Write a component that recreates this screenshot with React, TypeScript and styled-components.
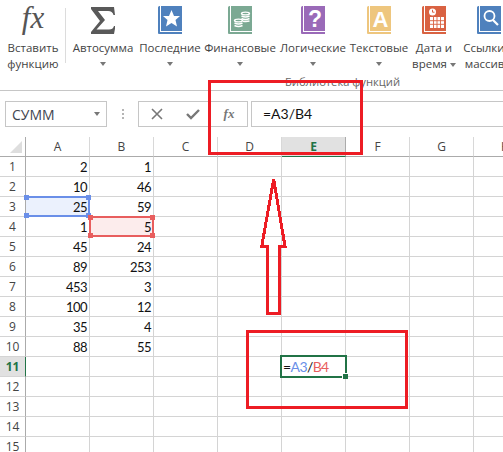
import type { ReactNode } from 'react';
import styled, { createGlobalStyle } from 'styled-components';

const Global = createGlobalStyle`
  html, body { margin: 0; padding: 0; background: #fff; }
  body { font-family: 'Open Sans', 'Liberation Sans', sans-serif; overflow: hidden; }
`;

const Page = styled.div`
  position: relative;
  width: 503px;
  height: 452px;
  overflow: hidden;
  background: #fff;
`;

/* ribbon */
const Ribbon = styled.div`
  height: 91px;
  box-sizing: border-box;
  border-bottom: 1px solid #c6c6c6;
  overflow: hidden;
`;

const RibbonRow = styled.div`
  display: flex;
  height: 75px;
  width: 522px;
`;

const RibbonItem = styled.div<{ $w: number; $sep?: boolean }>`
  position: relative;
  flex: none;
  width: ${({ $w }) => $w}px;
  display: flex;
  flex-direction: column;
  align-items: center;
  padding-top: 6px;
  box-sizing: border-box;
  font-size: 11.5px;
  line-height: 16px;
  color: #444;
  white-space: nowrap;
  ${({ $sep }) =>
    $sep &&
    `
    &::after {
      content: '';
      position: absolute;
      right: 0;
      top: 8px;
      height: 55px;
      width: 1px;
      background: #dcdcdc;
    }
  `}
`;

const IconSlot = styled.div`
  height: 28px;
  margin-bottom: 6px;
  display: flex;
  align-items: center;
  justify-content: center;
`;

const FxGlyph = styled.span`
  font-family: 'Liberation Serif', serif;
  font-style: italic;
  font-size: 31px;
  line-height: 26px;
  margin-top: -4px;
  color: #555;
`;

const Caret = styled.i`
  display: inline-block;
  width: 0;
  height: 0;
  border-left: 3.5px solid transparent;
  border-right: 3.5px solid transparent;
  border-top: 4px solid #777;
  vertical-align: middle;
`;

const CaretLine = styled.div`
  height: 16px;
  display: flex;
  align-items: center;
`;

const GroupLabel = styled.div`
  padding-left: 285px;
  font-size: 11.2px;
  line-height: 14px;
  color: #666;
`;

/* formula bar */
const FormulaBar = styled.div`
  height: 46px;
  box-sizing: border-box;
  padding: 10px 0 0 5px;
  display: flex;
  align-items: flex-start;
`;

const NameBox = styled.div`
  width: 102px;
  height: 26px;
  box-sizing: border-box;
  border: 1px solid #c6c6c6;
  display: flex;
  align-items: center;
  justify-content: space-between;
  padding: 0 6px;
  font-size: 14px;
  color: #3f4650;
`;

const Dots = styled.div`
  width: 31px;
  height: 26px;
  display: flex;
  flex-direction: column;
  align-items: center;
  justify-content: center;
  gap: 2px;
  flex: none;

  i {
    width: 2px;
    height: 2px;
    background: #b5b5b5;
  }
`;

const ButtonBox = styled.div`
  width: 110px;
  height: 26px;
  box-sizing: border-box;
  border: 1px solid #c6c6c6;
  display: grid;
  grid-template-columns: repeat(3, 36px);
  align-items: center;
  justify-items: center;
  flex: none;
`;

const SmallFx = styled.span`
  font-family: 'Liberation Serif', serif;
  font-style: italic;
  font-weight: bold;
  font-size: 13px;
  color: #777;
`;

const FormulaInput = styled.div`
  margin-left: 3px;
  flex: 1;
  height: 26px;
  box-sizing: border-box;
  border: 1px solid #c6c6c6;
  border-right: none;
  padding-left: 11px;
  font-family: Lato, 'Liberation Sans', sans-serif;
  font-size: 14px;
  line-height: 24px;
  color: #111;
`;

/* sheet */
const Sheet = styled.div`
  display: grid;
  grid-template-columns: 26px repeat(8, 64px);
  grid-auto-rows: 20px;
  width: 538px;
  font-family: Lato, 'Liberation Sans', sans-serif;
`;

const Corner = styled.div`
  position: relative;
  box-sizing: border-box;
  border-right: 1px solid #ababab;
  border-bottom: 1px solid #ababab;

  &::after {
    content: '';
    position: absolute;
    right: 3px;
    bottom: 3px;
    border-style: solid;
    border-width: 0 0 12px 12px;
    border-color: transparent transparent #dedede transparent;
  }
`;

const ColHead = styled.div<{ $active?: boolean }>`
  box-sizing: border-box;
  border-right: 1px solid ${({ $active }) => ($active ? '#ababab' : '#d8d8d8')};
  border-bottom: 1px solid ${({ $active }) => ($active ? '#217346' : '#ababab')};
  background: ${({ $active }) => ($active ? '#e1e1e1' : '#fff')};
  color: ${({ $active }) => ($active ? '#217346' : '#444')};
  font-family: 'Open Sans', sans-serif;
  font-weight: ${({ $active }) => ($active ? 700 : 400)};
  font-size: 12px;
  line-height: 19px;
  text-align: center;
`;

const RowHead = styled.div<{ $active?: boolean }>`
  box-sizing: border-box;
  border-right: 1px solid ${({ $active }) => ($active ? '#217346' : '#ababab')};
  border-bottom: 1px solid #d4d4d4;
  background: ${({ $active }) => ($active ? '#e1e1e1' : '#fff')};
  color: ${({ $active }) => ($active ? '#217346' : '#444')};
  font-family: 'Open Sans', sans-serif;
  font-weight: ${({ $active }) => ($active ? 700 : 400)};
  font-size: 12px;
  line-height: 20px;
  text-align: center;
`;

const Cell = styled.div<{ $fill?: string }>`
  box-sizing: border-box;
  border-right: 1px solid #d4d4d4;
  border-bottom: 1px solid #d4d4d4;
  background: ${({ $fill }) => $fill || '#fff'};
  padding-right: 2px;
  text-align: right;
  font-size: 13px;
  letter-spacing: -0.5px;
  line-height: 21px;
  color: #111;
`;

/* overlays */
const RangeBox = styled.div<{ $color: string; $left: number; $top: number; $open?: boolean }>`
  position: absolute;
  left: ${({ $left }) => $left}px;
  top: ${({ $top }) => $top}px;
  width: 65px;
  height: 21px;
  box-sizing: border-box;
  border: 2px solid ${({ $color }) => $color};
  ${({ $open }) => $open && 'border-left-color: transparent;'}
`;

const Handle = styled.i<{ $color: string; $x: 'left' | 'right'; $y: 'top' | 'bottom' }>`
  position: absolute;
  width: 5px;
  height: 5px;
  background: ${({ $color }) => $color};
  ${({ $x }) => $x}: -3px;
  ${({ $y }) => $y}: -3px;
`;

const CellEditor = styled.div`
  position: absolute;
  left: 280px;
  top: 355px;
  width: 67px;
  height: 23px;
  box-sizing: border-box;
  border: 2px solid #217346;
  background: #fff;
  padding-left: 1px;
  font-family: Lato, 'Liberation Sans', sans-serif;
  font-size: 14px;
  letter-spacing: -0.6px;
  line-height: 19px;
  color: #111;

  &::after {
    content: '';
    position: absolute;
    right: -3px;
    bottom: -3px;
    width: 5px;
    height: 5px;
    background: #217346;
    border-left: 1px solid #fff;
    border-top: 1px solid #fff;
  }
`;

const Ref = styled.span<{ $color: string }>`
  color: ${({ $color }) => $color};
`;

const RedBox = styled.div<{ $left: number; $top: number; $w: number; $h: number }>`
  position: absolute;
  left: ${({ $left }) => $left}px;
  top: ${({ $top }) => $top}px;
  width: ${({ $w }) => $w}px;
  height: ${({ $h }) => $h}px;
  box-sizing: border-box;
  border: 3px solid #ed1c24;
`;

const ArrowSvg = styled.svg`
  position: absolute;
  left: 255px;
  top: 170px;
`;

function Book({ color, children }: { color: string; children: ReactNode }) {
  return (
    <svg width="24" height="28" viewBox="0 0 24 28">
      <path d="M0 1.5 Q0 0 1.5 0 H2 V26 H24 V28 H1 Q0 28 0 27 Z" fill={color} />
      <rect x="3" y="0" width="21" height="25" fill={color} />
      {children}
    </svg>
  );
}

const bookText = {
  fontFamily: "'Liberation Sans', sans-serif",
  fontWeight: 700,
  textAnchor: 'middle',
  fill: '#fff',
} as const;

const items: { w: number; lines: string[]; icon: ReactNode; inlineCaret?: boolean }[] = [
  {
    w: 74,
    lines: ['Автосумма'],
    icon: (
      <svg width="24" height="27" viewBox="0 0 24 27">
        <path d="M0 0 H23 L24 8 H22.5 Q21.5 4 17 4 H7 L14 13 L5.5 22.5 H18 Q22 22.5 23 19 H24.5 L23 27 H0 V25 L9 14 L0 2 Z" fill="#595959" />
      </svg>
    ),
  },
  {
    w: 60,
    lines: ['Последние'],
    icon: (
      <Book color="#4f81bd">
        <polygon points="13.5,4 16,10 22,10 17.5,14 19,20.5 13.5,17 8,20.5 9.5,14 5,10 11,10" fill="#fff" />
      </Book>
    ),
  },
  {
    w: 80,
    lines: ['Финансовые'],
    icon: (
      <Book color="#7ba993">
        <g fill="none" stroke="#fff" strokeWidth="1.4">
          <ellipse cx="17.5" cy="7.5" rx="4" ry="1.4" />
          <path d="M13.5 10 Q17.5 12 21.5 10 M13.5 12.5 Q17.5 14.5 21.5 12.5 M15 15.2 Q18.5 15.8 21.5 15" />
          <ellipse cx="10.5" cy="14.5" rx="4" ry="1.4" />
          <path d="M6.5 17 Q10.5 19 14.5 17 M6.5 19.5 Q10.5 21.5 14.5 19.5" />
        </g>
      </Book>
    ),
  },
  {
    w: 66,
    lines: ['Логические'],
    icon: (
      <Book color="#9a6ab8">
        <text x="14" y="21" fontSize="23" {...bookText}>?</text>
      </Book>
    ),
  },
  {
    w: 66,
    lines: ['Текстовые'],
    icon: (
      <Book color="#eec67e">
        <text x="13.5" y="21" fontSize="22" {...bookText}>A</text>
      </Book>
    ),
  },
  {
    w: 44,
    lines: ['Дата и', 'время'],
    inlineCaret: true,
    icon: (
      <Book color="#d96242">
        <circle cx="10.5" cy="6" r="3.5" fill="#fff" />
        <path d="M10.5 3.8 V6.2 H12.5" stroke="#d96242" strokeWidth="1" fill="none" />
        <path d="M8 11 H22 V22 H8 Z" fill="#fff" />
        <path d="M8 14.7 H22 M8 18.3 H22 M11.5 11 V22 M15 11 V22 M18.5 11 V22" stroke="#d96242" strokeWidth="0.9" />
      </Book>
    ),
  },
  {
    w: 66,
    lines: ['Ссылки и', 'массивы'],
    icon: (
      <Book color="#4f81bd">
        <circle cx="12.5" cy="10" r="5" fill="none" stroke="#fff" strokeWidth="1.8" />
        <path d="M16 14 L21 19" stroke="#fff" strokeWidth="2.2" />
      </Book>
    ),
  },
];

const columns = ['A', 'B', 'C', 'D', 'E', 'F', 'G', 'H'];

const data: [number, number][] = [
  [2, 1],
  [10, 46],
  [25, 59],
  [1, 5],
  [45, 24],
  [89, 253],
  [453, 3],
  [100, 12],
  [35, 4],
  [88, 55],
];

const rows = Array.from({ length: 15 }, (_, i) => i);

function cellFill(row: number, col: number) {
  if (row === 2 && col === 0) return '#ebf1fd';
  if (row === 3 && col === 1) return '#fcecec';
  return undefined;
}

function RowGroup({ row }: { row: number }) {
  const values = data[row];
  return (
    <>
      <RowHead $active={row === 10}>{row + 1}</RowHead>
      {columns.map((c, col) => (
        <Cell key={c} $fill={cellFill(row, col)}>
          {values && col < 2 ? values[col] : null}
        </Cell>
      ))}
    </>
  );
}

export default function App() {
  return (
    <Page>
      <Global />
      <Ribbon>
        <RibbonRow>
          <RibbonItem $w={66} $sep>
            <IconSlot>
              <FxGlyph>fx</FxGlyph>
            </IconSlot>
            <div>Вставить</div>
            <div>функцию</div>
          </RibbonItem>
          {items.map((item) => (
            <RibbonItem key={item.lines[0]} $w={item.w}>
              <IconSlot>{item.icon}</IconSlot>
              {item.lines.map((line, i) => (
                <div key={line}>
                  {line}
                  {item.inlineCaret && i === 1 && (
                    <>
                      {' '}
                      <Caret />
                    </>
                  )}
                </div>
              ))}
              {item.lines.length === 1 && (
                <CaretLine>
                  <Caret />
                </CaretLine>
              )}
            </RibbonItem>
          ))}
        </RibbonRow>
        <GroupLabel>Библиотека функций</GroupLabel>
      </Ribbon>

      <FormulaBar>
        <NameBox>
          СУММ
          <Caret />
        </NameBox>
        <Dots>
          <i />
          <i />
          <i />
        </Dots>
        <ButtonBox>
          <svg width="12" height="12" viewBox="0 0 12 12">
            <path d="M1 1 L11 11 M11 1 L1 11" stroke="#777" strokeWidth="1.6" />
          </svg>
          <svg width="14" height="12" viewBox="0 0 14 12">
            <path d="M1 6 L5 10 L13 2" stroke="#777" strokeWidth="2.4" fill="none" />
          </svg>
          <SmallFx>fx</SmallFx>
        </ButtonBox>
        <FormulaInput>=A3/B4</FormulaInput>
      </FormulaBar>

      <Sheet>
        <Corner />
        {columns.map((c) => (
          <ColHead key={c} $active={c === 'E'}>
            {c}
          </ColHead>
        ))}
        {rows.map((row) => (
          <RowGroup key={row} row={row} />
        ))}
      </Sheet>

      <RangeBox $color="#6a8fe8" $left={25} $top={196} $open>
        <Handle $color="#6a8fe8" $x="left" $y="top" />
        <Handle $color="#6a8fe8" $x="right" $y="top" />
        <Handle $color="#6a8fe8" $x="left" $y="bottom" />
        <Handle $color="#6a8fe8" $x="right" $y="bottom" />
      </RangeBox>
      <RangeBox $color="#e85e5e" $left={89} $top={216}>
        <Handle $color="#e85e5e" $x="left" $y="top" />
        <Handle $color="#e85e5e" $x="right" $y="top" />
        <Handle $color="#e85e5e" $x="left" $y="bottom" />
        <Handle $color="#e85e5e" $x="right" $y="bottom" />
      </RangeBox>

      <CellEditor>
        =<Ref $color="#6a8fe8">A3</Ref>/<Ref $color="#e85e5e">B4</Ref>
      </CellEditor>

      <RedBox $left={208} $top={80} $w={155} $h={75} />
      <RedBox $left={246} $top={330} $w={162} $h={79} />
      <ArrowSvg width="40" height="150" viewBox="0 0 40 150" shapeRendering="crispEdges">
        <polygon
          points="18.7,9 6.7,76.5 12,76.5 12,143 24,143 24,76.5 30,76.5"
          fill="none"
          stroke="#ed1c24"
          strokeWidth="3"
        />
      </ArrowSvg>
    </Page>
  );
}
